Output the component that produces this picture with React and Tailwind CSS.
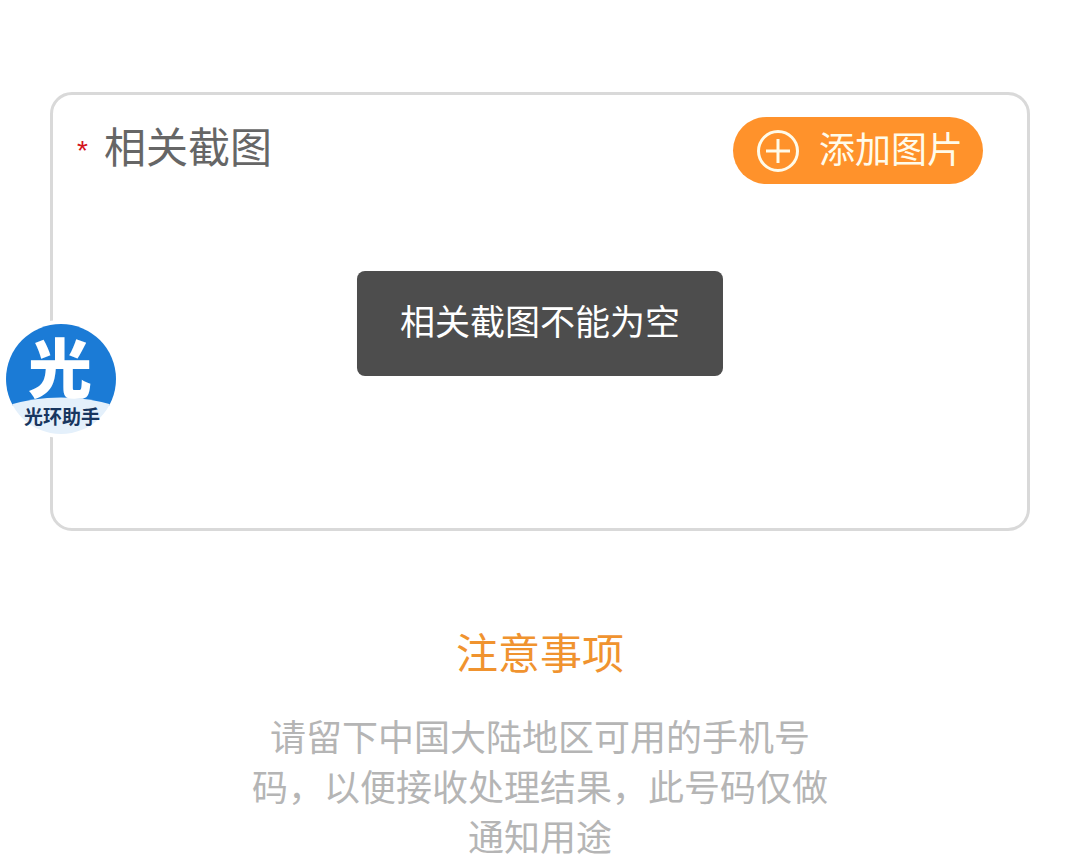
import { useState } from 'react';

function AssistantLogo() {
  return (
    <svg viewBox="0 0 118 118" className="w-[118px] h-[118px]">
      <defs>
        <clipPath id="badge">
          <circle cx="59" cy="59" r="55" />
        </clipPath>
      </defs>
      <circle cx="59" cy="59" r="59" fill="#fff" />
      <g clipPath="url(#badge)">
        <rect width="118" height="86" fill="#1b7bd6" />
        <path d="M0 87 Q59 68 118 87 V118 H0 Z" fill="#e4f0fb" />
      </g>
      <text
        x="58"
        y="72"
        textAnchor="middle"
        fontSize="64"
        fontWeight="900"
        fill="#fff"
      >
        光
      </text>
      <text
        x="60"
        y="104"
        textAnchor="middle"
        fontSize="19"
        fontWeight="700"
        fill="#18365f"
      >
        光环助手
      </text>
    </svg>
  );
}

function PlusCircle() {
  return (
    <svg
      viewBox="0 0 42 42"
      fill="none"
      stroke="currentColor"
      strokeWidth="3"
      className="w-[42px] h-[42px]"
    >
      <circle cx="21" cy="21" r="19.5" />
      <path d="M9 21h24M21 9v24" />
    </svg>
  );
}

export default function App() {
  const [message, setMessage] = useState('相关截图不能为空');

  return (
    <main className="relative bg-white pt-[92px] font-['Noto_Sans_CJK_SC',sans-serif]">
      <section className="mx-[50px] min-h-[439px] rounded-[22px] border-3 border-[#d9d9d9] pt-[22px] pl-6 pr-11">
        <div className="flex items-start justify-between">
          <h2 className="flex items-start gap-4 text-[42px] leading-[56px] text-[#666]">
            <span className="font-['Liberation_Sans',sans-serif] text-[28px] leading-[68px] text-[#d4141c]">
              *
            </span>
            相关截图
          </h2>
          <button
            type="button"
            onClick={() => setMessage('')}
            className="flex h-[67px] items-center gap-5 rounded-full bg-[#ff922b] px-6 pr-5 text-4xl text-[#fffbea]"
          >
            <PlusCircle />
            <span className="pb-2">添加图片</span>
          </button>
        </div>
      </section>

      <section className="mt-22 text-center">
        <h2 className="text-[42px] leading-[64px] text-[#f0932f]">注意事项</h2>
        <p className="mx-auto mt-[27px] max-w-[580px] text-4xl leading-[50px] text-[#b5b5b5]">
          请留下中国大陆地区可用的手机号码，以便接收处理结果，此号码仅做通知用途
        </p>
      </section>

      <a href="#assistant" className="absolute left-[2px] top-80">
        <AssistantLogo />
      </a>

      {message && (
        <div
          role="alert"
          className="absolute left-1/2 top-[271px] -translate-x-1/2 whitespace-nowrap rounded-lg bg-[#4d4d4d] px-[43px] pt-[25px] pb-8 text-[35px] leading-[48px] text-white"
        >
          {message}
        </div>
      )}
    </main>
  );
}
